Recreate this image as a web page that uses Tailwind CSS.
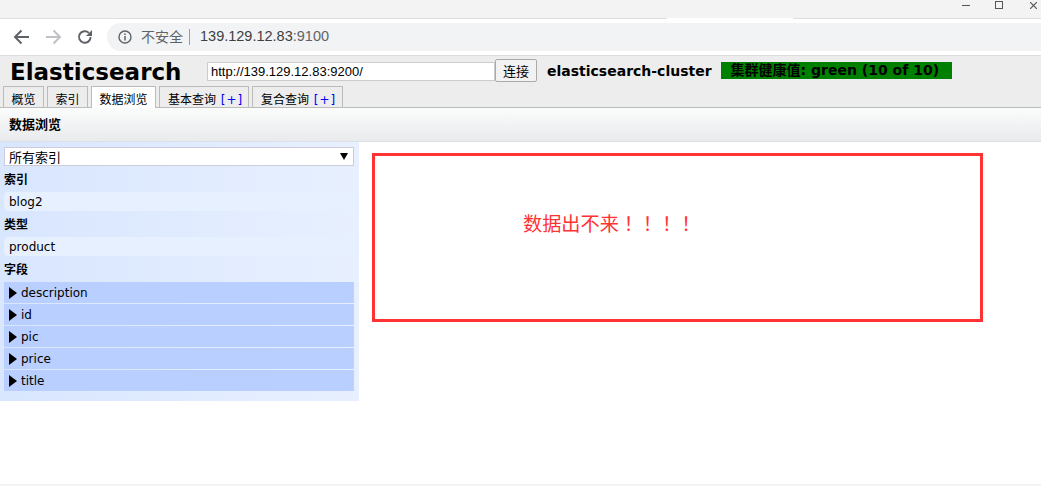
<!DOCTYPE html>
<html lang="zh-CN">
  <head>
    <meta charset="UTF-8" />
    <title>Elasticsearch</title>
    <script src="https://cdn.jsdelivr.net/npm/@tailwindcss/browser@4"></script>
  </head>
  <body class="w-[1041px] h-[486px] overflow-hidden flex flex-col bg-white text-black font-['DejaVu_Sans','Noto_Sans_CJK_SC',sans-serif] text-[12px]">
    <!-- window title bar -->
    <div class="h-[19px] shrink-0 bg-[#f3f3f3] border-b border-[#dedee3] relative flex justify-end items-start">
      <div class="w-[8px] h-px mt-[5px] bg-[#555]"></div>
      <div class="w-[8px] h-[8px] mt-px ml-[25px] border border-[#555]"></div>
      <svg class="mt-[2px] ml-[27px] mr-[4px]" width="7" height="7" viewBox="0 0 7 7"><path d="M0 0L7 7M7 0L0 7" stroke="#555" stroke-width="1.2" fill="none" /></svg>
      <div class="absolute left-[667px] bottom-[-1px] w-[126px] h-px bg-white"></div>
    </div>

    <!-- browser toolbar -->
    <div class="h-[37px] shrink-0 bg-white border-b border-[#ddd] flex items-start pt-[4px]">
      <div class="w-[107px] h-[28px] flex items-center shrink-0">
        <svg class="ml-[13px]" width="17" height="16" viewBox="0 0 17 16"><path d="M16 8H2M8.5 1.5L2 8l6.5 6.5" stroke="#5f6368" stroke-width="2" fill="none" /></svg>
        <svg class="ml-[15px]" width="17" height="16" viewBox="0 0 17 16"><path d="M1 8h14M8.5 1.5L15 8l-6.5 6.5" stroke="#c0c2c5" stroke-width="2" fill="none" /></svg>
        <svg class="ml-[15px]" width="16" height="16" viewBox="0 0 16 16"><path d="M13.6 8a5.8 5.8 0 1 1-1.7-4.1" stroke="#5f6368" stroke-width="2" fill="none" /><path d="M15 1v6H9z" fill="#5f6368" /></svg>
      </div>
      <div class="flex-1 h-[28px] bg-[#f1f3f4] rounded-l-[14px] flex items-center font-['Liberation_Sans','Noto_Sans_CJK_SC',sans-serif]">
        <svg class="ml-[11px]" width="14" height="14" viewBox="0 0 14 14"><circle cx="7" cy="7" r="6" stroke="#5f6368" stroke-width="1.4" fill="none" /><path d="M7 6v4.5M7 3.4v1.5" stroke="#5f6368" stroke-width="1.5" /></svg>
        <span class="ml-[9px] text-[14px] text-[#5f6368]">不安全</span>
        <span class="ml-[6px] w-px h-[16px] bg-[#9a9ca0]"></span>
        <span class="ml-[10px] text-[14.5px] text-[#5f6368]"><span class="text-[#3c4043]">139.129.12.83</span>:9100</span>
      </div>
    </div>

    <!-- head app header -->
    <div class="h-[52px] shrink-0 bg-[#ededed] border-b border-[#bbb] relative">
      <div class="flex items-start h-[31px]">
        <h1 class="ml-[10px] mt-[1px] w-[197px] text-[23px] leading-[30px] font-bold">Elasticsearch</h1>
        <input class="mt-[6px] w-[288px] h-[19px] bg-white border border-[#ccc] px-[3px] text-[13px] font-['Liberation_Sans',sans-serif] outline-none" value="http://139.129.12.83:9200/" />
        <button class="mt-[3px] w-[42px] h-[23px] bg-[#f2f2f2] border border-[#aaa] rounded-[2px] text-[13px] font-['Noto_Sans_CJK_SC',sans-serif]">连接</button>
        <span class="ml-[10px] mt-[6px] text-[14px] leading-[18px] font-bold">elasticsearch-cluster</span>
        <span class="ml-[9px] mt-[6px] w-[231px] h-[17px] bg-[#008000] pl-[10px] text-[14px] leading-[17px] font-bold whitespace-nowrap">集群健康值: green (10 of 10)</span>
      </div>
      <div class="absolute left-[3px] bottom-[-1px] flex gap-[3px] text-[12px] leading-[20px] font-['DejaVu_Sans','Noto_Sans_CJK_SC',sans-serif]">
        <div class="w-[41px] h-[21px] pt-[3px] text-center border border-b-0 border-[#bbb] bg-[#ededed]">概览</div>
        <div class="w-[41px] h-[21px] pt-[3px] text-center border border-b-0 border-[#bbb] bg-[#ededed]">索引</div>
        <div class="w-[65px] h-[22px] pt-[3px] text-center border border-b-0 border-[#bbb] bg-white">数据浏览</div>
        <div class="w-[90px] h-[21px] pt-[3px] pl-[8px] border border-b-0 border-[#bbb] bg-[#ededed] whitespace-nowrap overflow-hidden">基本查询 <span class="text-[#00f] tracking-[1px] ml-px">[+]</span></div>
        <div class="w-[91px] h-[21px] pt-[3px] pl-[8px] border border-b-0 border-[#bbb] bg-[#ededed] whitespace-nowrap overflow-hidden">复合查询 <span class="text-[#00f] tracking-[1px] ml-px">[+]</span></div>
      </div>
    </div>

    <!-- page title -->
    <div class="h-[34px] shrink-0 pl-[9px] bg-gradient-to-b from-[#fbfcfc] to-[#e8eaec] border-b border-[#dcdfe6] text-[13px] leading-[31px] font-bold font-['Noto_Sans_CJK_SC',sans-serif]">数据浏览</div>

    <div class="flex items-start">
      <!-- sidebar -->
      <div class="w-[359px] h-[259px] shrink-0 bg-gradient-to-r from-[#d8e6fe] to-[#e8f0ff] pl-[4px] pr-[5px] pt-[5px]">
        <div class="h-[19px] bg-white border border-[#ccd] flex items-center pl-[4px] pr-[5px] text-[13px] font-['Noto_Sans_CJK_SC',sans-serif]">
          <span class="flex-1">所有索引</span>
          <svg width="8" height="7" viewBox="0 0 8 7"><path d="M0 0h8L4 7z" fill="#000" /></svg>
        </div>
        <div class="h-[26px] leading-[25px] font-bold font-['Noto_Sans_CJK_SC',sans-serif]">索引</div>
        <div class="h-[19px] pl-[5px] bg-[#e6f0fe] rounded-l-[4px] leading-[21px]">blog2</div>
        <div class="h-[26px] leading-[25px] font-bold font-['Noto_Sans_CJK_SC',sans-serif]">类型</div>
        <div class="h-[19px] pl-[5px] bg-[#e6f0fe] rounded-l-[4px] leading-[21px]">product</div>
        <div class="h-[26px] leading-[25px] font-bold font-['Noto_Sans_CJK_SC',sans-serif]">字段</div>
        <div class="flex flex-col gap-px">
          <div class="h-[21px] bg-[#b8cfff] flex items-center pl-[5px] gap-[4px]"><svg width="8" height="12" viewBox="0 0 8 12"><path d="M0 0l8 6-8 6z" fill="#000" /></svg>description</div>
          <div class="h-[21px] bg-[#b8cfff] flex items-center pl-[5px] gap-[4px]"><svg width="8" height="12" viewBox="0 0 8 12"><path d="M0 0l8 6-8 6z" fill="#000" /></svg>id</div>
          <div class="h-[21px] bg-[#b8cfff] flex items-center pl-[5px] gap-[4px]"><svg width="8" height="12" viewBox="0 0 8 12"><path d="M0 0l8 6-8 6z" fill="#000" /></svg>pic</div>
          <div class="h-[21px] bg-[#b8cfff] flex items-center pl-[5px] gap-[4px]"><svg width="8" height="12" viewBox="0 0 8 12"><path d="M0 0l8 6-8 6z" fill="#000" /></svg>price</div>
          <div class="h-[21px] bg-[#b8cfff] flex items-center pl-[5px] gap-[4px]"><svg width="8" height="12" viewBox="0 0 8 12"><path d="M0 0l8 6-8 6z" fill="#000" /></svg>title</div>
        </div>
      </div>

      <!-- annotation box -->
      <div class="ml-[13px] mt-[11px] w-[611px] h-[169px] border-[3px] border-[#ff3333] pl-[148px] pt-[53px] text-[19.2px] leading-[28px] text-[#ff3333] font-['Noto_Sans_CJK_SC',sans-serif]">数据出不来<span lang="zh-TW" class="font-['Noto_Sans_CJK_TC',sans-serif]">！！！！</span></div>
    </div>

    <div class="mt-auto h-[2px] shrink-0 bg-[#f3f3f3]"></div>
  </body>
</html>
